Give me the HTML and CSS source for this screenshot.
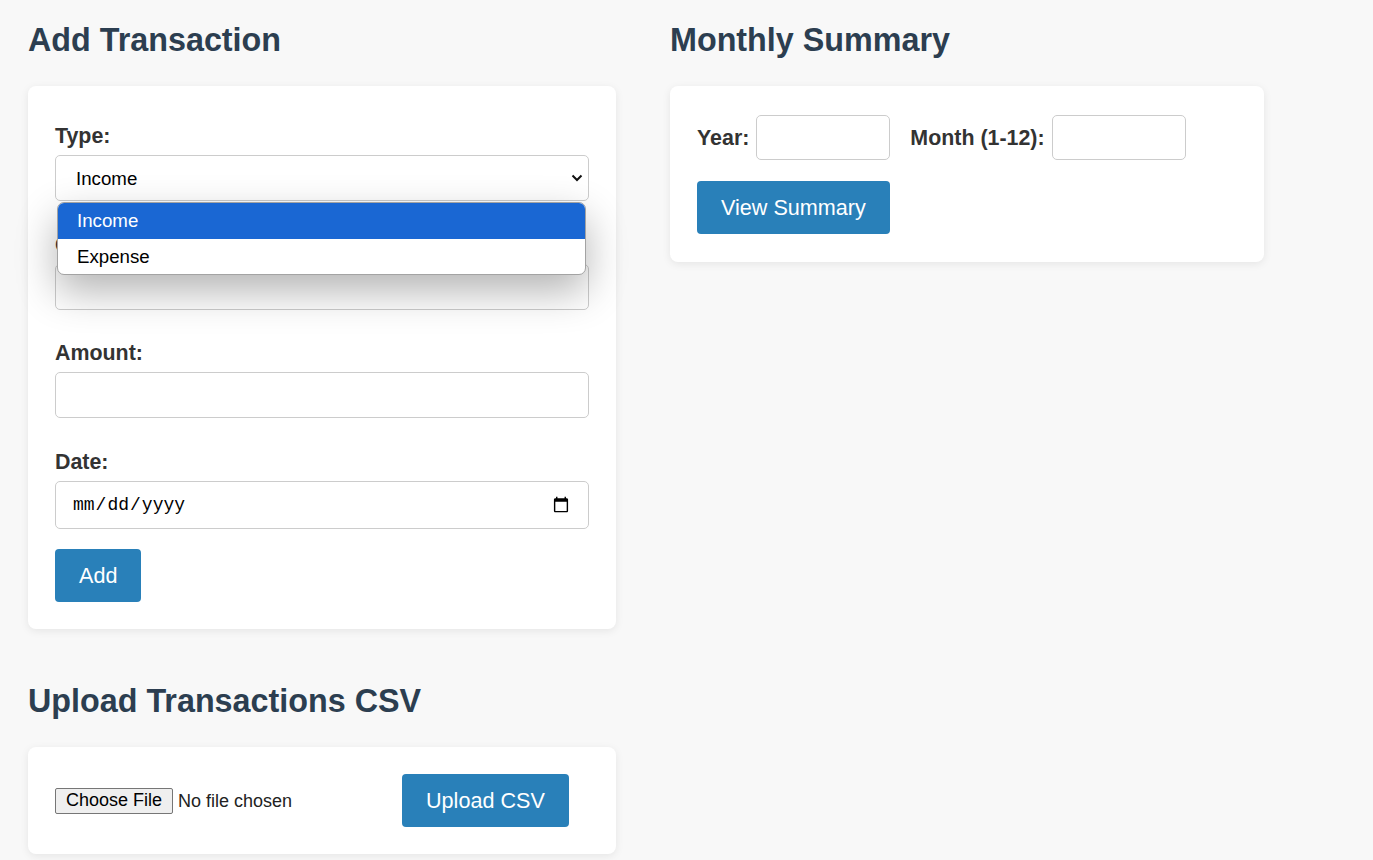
FILE: index.html
```html
<!DOCTYPE html>
<html lang="en">
<head>
<meta charset="utf-8">
<title>Finance Tracker</title>
<link rel="stylesheet" href="styles.css">
</head>
<body>
<div class="page">
  <div class="col col-left">
    <section class="section">
      <h2 class="title">Add Transaction</h2>
      <form class="card form-card">
        <div class="field">
          <label class="label">Type:</label>
          <div class="select-wrap">
            <select class="control select">
              <option>Income</option>
              <option>Expense</option>
            </select>
            <svg class="chev" width="12" height="8" viewBox="0 0 12 8"><path d="M1.5 1.5 L6 6 L10.5 1.5" fill="none" stroke="#111" stroke-width="2"/></svg>
            <ul class="dropdown">
              <li class="opt opt-active">Income</li>
              <li class="opt">Expense</li>
            </ul>
          </div>
        </div>
        <div class="field">
          <label class="label">Category:</label>
          <input class="control" type="text">
        </div>
        <div class="field">
          <label class="label">Amount:</label>
          <input class="control" type="text">
        </div>
        <div class="field">
          <label class="label">Date:</label>
          <input class="control date" type="date">
        </div>
        <button type="button" class="btn">Add</button>
      </form>
    </section>
    <section class="section">
      <h2 class="title">Upload Transactions CSV</h2>
      <div class="card upload-card">
        <input class="file" type="file">
        <button type="button" class="btn">Upload CSV</button>
      </div>
    </section>
  </div>
  <div class="col col-right">
    <section class="section">
      <h2 class="title">Monthly Summary</h2>
      <div class="card summary-card">
        <div class="summary-row">
          <label class="label inline-label">Year:</label>
          <input class="control small" type="text">
          <label class="label inline-label month-label">Month (1-12):</label>
          <input class="control small" type="text">
        </div>
        <button type="button" class="btn">View Summary</button>
      </div>
    </section>
  </div>
</div>
</body>
</html>
```

FILE: styles.css
```css
* { box-sizing: border-box; }

html, body {
  margin: 0;
  padding: 0;
  background: #f8f8f8;
  font-family: "Liberation Sans", Arial, sans-serif;
  color: #333;
}

.page {
  display: flex;
  align-items: flex-start;
  gap: 54px;
  padding: 0 28px;
}

.col-left { width: 588px; }
.col-right { width: 594px; }

.section { margin-bottom: 54px; }

.title {
  margin: 22px 0 27px;
  font-size: 32.3px;
  line-height: 37px;
  font-weight: 700;
  color: #2c3e50;
}

.card {
  background: #fff;
  border-radius: 8px;
  box-shadow: 0 2px 8px rgba(0, 0, 0, 0.08);
}

.form-card {
  padding: 27px;
}

.field {
  display: flow-root;
  margin-bottom: 20.5px;
}

.label {
  display: block;
  margin: 11px 0 7px;
  font-size: 21.4px;
  line-height: 24px;
  font-weight: 700;
  color: #333;
}

.control {
  display: block;
  width: 100%;
  height: 46px;
  padding: 0 16px;
  border: 1px solid #ccc;
  border-radius: 5px;
  background: #fff;
  font-family: "Liberation Sans", Arial, sans-serif;
  font-size: 18.7px;
  color: #000;
  outline: none;
}

.select-wrap {
  position: relative;
}

.select {
  appearance: none;
  -webkit-appearance: none;
  padding-left: 20px;
}

.chev {
  position: absolute;
  right: 6px;
  top: 19px;
  width: 12px;
  height: 8px;
  pointer-events: none;
}

.dropdown {
  position: absolute;
  top: 47px;
  left: 2px;
  right: 3px;
  margin: 0;
  padding: 0;
  list-style: none;
  background: #fff;
  border: 1px solid #a3a3a3;
  border-radius: 7px;
  overflow: hidden;
  box-shadow: 0 16px 40px rgba(0, 0, 0, 0.3);
  z-index: 10;
}

.opt {
  height: 35.5px;
  line-height: 35px;
  padding-left: 19px;
  font-size: 18.7px;
  color: #000;
}

.opt-active {
  background: #1a67d3;
  color: #fff;
}

.date {
  height: 48px;
  padding: 0 16px;
  font-family: "Liberation Mono", "DejaVu Sans Mono", monospace;
  font-size: 18px;
}

.btn {
  display: inline-block;
  height: 53px;
  padding: 0 24px;
  border: none;
  border-radius: 4px;
  background: #2980b9;
  color: #fff;
  font-family: "Liberation Sans", Arial, sans-serif;
  font-size: 21.6px;
  cursor: pointer;
}

.upload-card {
  display: flex;
  align-items: center;
  padding: 27px;
}

.file {
  width: 347px;
  font-family: "Liberation Sans", Arial, sans-serif;
  font-size: 18px;
  color: #222;
}

.file::file-selector-button {
  font-family: "Liberation Sans", Arial, sans-serif;
  font-size: 18px;
  padding: 0 10px;
  height: 26px;
  margin-right: 5px;
  background: #efefef;
  border: 1px solid #767676;
  border-radius: 2px;
  color: #000;
}

.summary-card {
  padding: 29px 27px 28px;
}

.summary-row {
  display: flex;
  align-items: center;
  margin-bottom: 21px;
}

.inline-label {
  margin: 0 7px 0 0;
}

.month-label {
  margin-left: 20px;
}

.small {
  width: 134px;
  height: 45px;
}
```
